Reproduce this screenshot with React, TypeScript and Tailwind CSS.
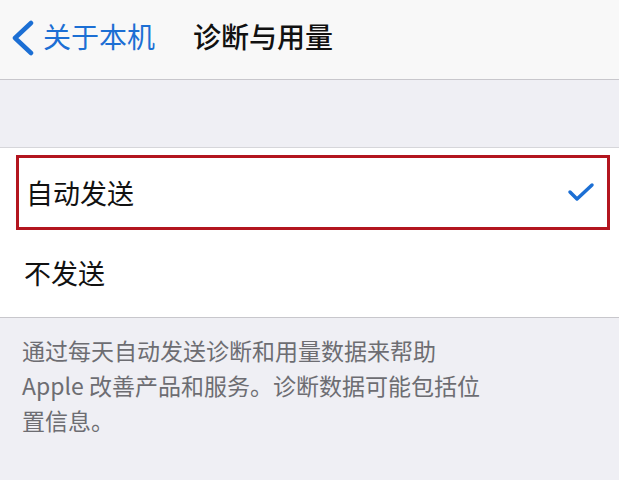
import React from "react";

export default function App() {
  const font = { fontFamily: '"Noto Sans CJK SC", "Noto Sans", sans-serif' };
  return (
    <div className="w-[619px] h-[480px] overflow-hidden bg-[#efeff4] flex flex-col" style={font}>
      {/* Nav bar */}
      <div className="h-[80px] shrink-0 bg-[#f8f8f8] border-b border-[#c8c7cc] flex items-center pb-[8px]">
        <svg width="24" height="36" viewBox="0 0 24 36" className="ml-[11px] mt-[4px]">
          <polyline points="20,3 4,18 20,33" fill="none" stroke="#1c6fd4" strokeWidth="4.5" strokeLinecap="round" strokeLinejoin="round" />
        </svg>
        <span className="ml-[8px] text-[28px] leading-none text-[#1c6fd4]">关于本机</span>
        <span className="ml-[38px] text-[28px] leading-none text-[#111] font-medium">诊断与用量</span>
      </div>
      {/* Spacer */}
      <div className="h-[68px] shrink-0 border-b border-[#d6d6da]" />
      {/* Cells */}
      <div className="bg-white shrink-0 border-b border-[#c8c7cc]">
        <div className="h-[83px] pt-[7px] pl-[16px] pr-[9px] pb-[1px]">
          <div className="h-full border-[3px] border-[#b3151f] flex items-center justify-between pl-[7px] pr-[12px]">
            <span className="text-[27px] leading-none text-[#111]">自动发送</span>
            <svg width="28" height="22" viewBox="0 0 28 22">
              <polyline points="3,10 10,17 25,3" fill="none" stroke="#1c6fd4" strokeWidth="3.5" strokeLinecap="round" strokeLinejoin="round" />
            </svg>
          </div>
        </div>
        <div className="h-[86px] flex items-center pl-[24px] pb-[4px]">
          <span className="text-[27px] leading-none text-[#111]">不发送</span>
        </div>
      </div>
      {/* Footer */}
      <div className="pt-[15px] pl-[22px] text-[23px] leading-[35px] text-[#6d6d72]">
        <div>通过每天自动发送诊断和用量数据来帮助</div>
        <div>Apple 改善产品和服务。诊断数据可能包括位</div>
        <div>置信息。</div>
      </div>
    </div>
  );
}
